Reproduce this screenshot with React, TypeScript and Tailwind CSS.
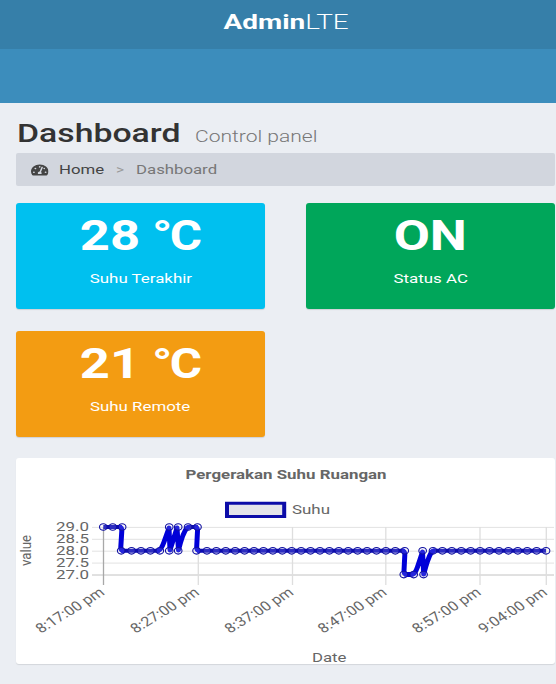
import type { ReactNode } from 'react';
import { FaTachometerAlt } from 'react-icons/fa';

const STRETCH = 1.25;
const MINUTE = 9.42;
const ORIGIN_X = 103.3;

const ticks = [
  { label: '8:17:00 pm', x: 103.5 },
  { label: '8:27:00 pm', x: 198.3 },
  { label: '8:37:00 pm', x: 292.5 },
  { label: '8:47:00 pm', x: 385.8 },
  { label: '8:57:00 pm', x: 480 },
  { label: '9:04:00 pm', x: 546.3 },
];

const levels = [29, 28.5, 28, 27.5, 27];

const yOf = (v: number) => 527 + (29 - v) * 23.8;
const at = (minute: number, v: number) => ({ x: ORIGIN_X + minute * MINUTE, y: yOf(v) });

const points = [
  at(0, 29), at(1, 29), at(2, 29),
  at(1.9, 28), at(3, 28), at(4, 28), at(5, 28), at(6, 28),
  at(7, 29), at(7, 28), at(7.95, 29), at(7.95, 28), at(9, 29), at(10, 29),
  ...Array.from({ length: 23 }, (_, i) => at(i === 0 ? 9.9 : 10 + i, 28)),
  at(31.9, 27), at(32.95, 27), at(33.9, 28), at(34, 27), at(35, 28),
  ...Array.from({ length: 12 }, (_, i) => at(36 + i, 28)),
];

const flatPath = 'M103.3 527H122M121 550.8H160M187 527H198M197 550.8H404M404 574.6H413M433 550.8H546';

const slopePath =
  'M119 527Q122 527 121.8 531L120.8 547Q120.7 550.8 124 550.8M157 550.8Q161 550.8 164 542L169 528L170 550L177 528L178.5 550Q183 532 187 528Q188 527 190 527M194.5 527Q197.8 527 197.5 531L196.7 547Q196.6 550.8 200 550.8M402 550.8Q405 550.8 404.8 555L404 571Q403.8 574.6 408 574.6H411Q415 574.6 417.5 567L422.5 552L423.7 574Q428 558 431 553Q432.5 550.8 435 550.8';

function Chart() {
  return (
    <svg
      className="block h-[206px] w-[539px]"
      viewBox="16 458 539 206"
      fontFamily="Roboto, sans-serif"
      fill="#666"
    >
      <text x="185.5" y="479" fontSize="12.8" fontWeight="700" textLength="201" lengthAdjust="spacingAndGlyphs">Pergerakan Suhu Ruangan</text>
      <rect x="227.2" y="503.5" width="57.4" height="13.2" fill="#e4e4ea" />
      <path d="M225 501.8h61.2v16.2h-61.2zM229 504.8v10.2h53.2v-10.2z" fillRule="evenodd" fill="#0c0ca8" />
      <text x="292" y="514" fontSize="13" textLength="38" lengthAdjust="spacingAndGlyphs">Suhu</text>
      {levels.map((v) => (
        <g key={v}>
          <line x1="92" x2="554" y1={yOf(v) + 0.4} y2={yOf(v) + 0.4} stroke={v === 27 ? '#c2c2c2' : '#e2e2e2'} />
          <text x="56" y={yOf(v) + 4.3} fontSize="13" textLength="33" lengthAdjust="spacingAndGlyphs">{v.toFixed(1)}</text>
        </g>
      ))}
      {ticks.map((t, i) => (
        <g key={t.label}>
          <line x1={t.x} x2={t.x} y1="527" y2="585" stroke={i === 0 ? '#a8a8a8' : '#dedede'} strokeWidth="1.3" />
          <g transform={`translate(${t.x + 3} 593.5) scale(${STRETCH} 1) rotate(-37.5)`}>
            <text x="-66" y="0" fontSize="13.4" textLength="65" lengthAdjust="spacingAndGlyphs">{t.label}</text>
          </g>
        </g>
      ))}
      <path d={flatPath} fill="none" stroke="#0a0ab8" strokeWidth="4" />
      <path d={slopePath} fill="none" stroke="#0000d8" strokeWidth="5" strokeLinejoin="round" />
      {points.map((p, i) => (
        <ellipse key={i} cx={p.x} cy={p.y} rx="3.8" ry="3.3" fill="#e5e5f5" fillOpacity=".16" stroke="#1010a0" strokeWidth="1.1" />
      ))}
      <text transform="translate(30.5 566) rotate(-90)" fontSize="15" textLength="31" lengthAdjust="spacingAndGlyphs">value</text>
      <text x="312" y="661.5" fontSize="13" textLength="34.5" lengthAdjust="spacingAndGlyphs">Date</text>
    </svg>
  );
}

function StatBox({ color, value, label }: { color: string; value: ReactNode; label: string }) {
  return (
    <div className={`flex h-[106px] w-[249px] flex-col items-center rounded-[3px] text-white shadow-[0_1px_1px_rgba(0,0,0,0.12)] ${color}`}>
      <div className="mt-[9px] scale-x-[1.25] whitespace-pre text-[42px] font-bold leading-[48px]">{value}</div>
      <div className="mt-[8px] scale-x-[1.25] text-[13.5px] leading-5">{label}</div>
    </div>
  );
}

function Celsius({ value }: { value: number }) {
  return (
    <>
      {value} <span className="-ml-px tracking-[-2.5px]">°</span>
      <span className="inline-block w-[26px] origin-left scale-x-[0.94]">C</span>
    </>
  );
}

export default function App() {
  return (
    <div className="h-[684px] w-[556px] overflow-hidden bg-[#ebeef3] font-['Roboto',sans-serif]">
      <header>
        <div className="flex h-[49px] justify-center bg-[#367fa9] pt-[6px] pl-[16px]">
          <span className="scale-x-[1.33] text-[21px] leading-8 text-white">
            <b className="font-bold">Admin</b>
            <span className="font-light">LTE</span>
          </span>
        </div>
        <div className="h-[54px] bg-[#3c8dbc]" />
      </header>
      <main className="pl-[16px]">
        <div className="flex h-[50px] items-baseline pt-[12px] pl-px">
          <h1 className="w-[178px] text-[26.5px] font-medium leading-9 text-[#333]">
            <span className="inline-block origin-left scale-x-[1.275]">Dashboard</span>
          </h1>
          <small className="text-[16.5px] font-light text-[#777]">
            <span className="inline-block origin-left scale-x-[1.275] whitespace-nowrap">Control panel</span>
          </small>
        </div>
        <nav className="flex h-[33px] w-[539px] items-center rounded-[2px] bg-[#d2d6de] pl-[15px] text-[13px]">
          <FaTachometerAlt className="h-[14px] w-[14px] origin-left scale-x-[1.25] text-[#444]" />
          <span className="ml-[14px] w-[57px] text-[#444]">
            <span className="inline-block origin-left scale-x-[1.29]">Home</span>
          </span>
          <span className="w-[20px] text-[12px] text-[#999]">
            <span className="inline-block origin-left scale-x-[1.3]">&gt;</span>
          </span>
          <span className="text-[#777]">
            <span className="inline-block origin-left scale-x-[1.29]">Dashboard</span>
          </span>
        </nav>
        <section className="mt-[17px] grid grid-cols-[249px_249px] gap-x-[41px] gap-y-[22px]">
          <StatBox color="bg-[#00c0ef]" value={<Celsius value={28} />} label="Suhu Terakhir" />
          <StatBox color="bg-[#00a65a]" value="ON" label="Status AC" />
          <StatBox color="bg-[#f39c12]" value={<Celsius value={21} />} label="Suhu Remote" />
        </section>
        <section className="mt-[21px] w-[539px] rounded-[3px] bg-white shadow-[0_1px_1px_rgba(0,0,0,0.1)]">
          <Chart />
        </section>
      </main>
    </div>
  );
}
